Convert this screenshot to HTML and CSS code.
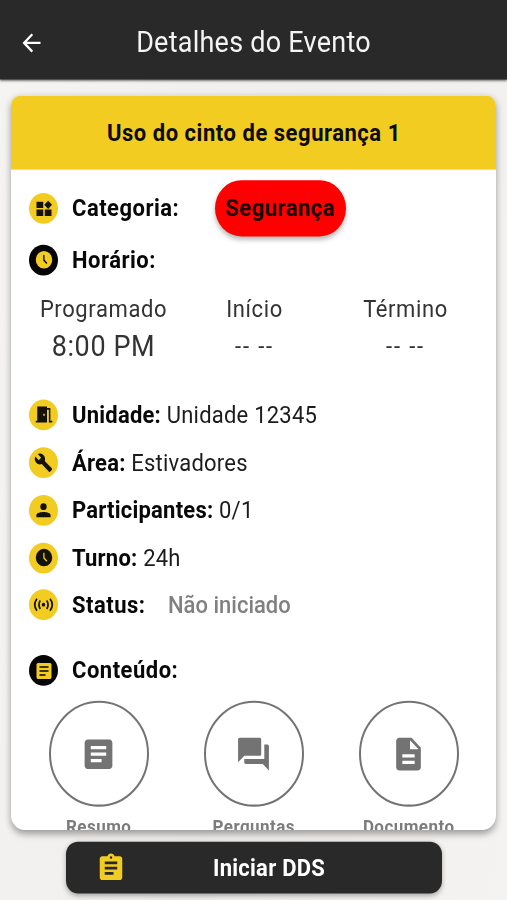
FILE: index.html
```html
<!DOCTYPE html>
<html lang="pt-BR">
<head>
<meta charset="utf-8">
<title>Detalhes do Evento</title>
<link rel="stylesheet" href="styles.css">
</head>
<body>
<div class="screen">
  <header class="topbar">
    <svg class="back" viewBox="0 0 24 24"><path d="M20 11H7.830l5.590-5.590L12 4l-8 8 8 8 1.410-1.410L7.830 13H20z"/></svg>
    <h1>Detalhes do Evento</h1>
  </header>
  <main class="card">
    <h2>Uso do cinto de segurança 1</h2>
    <div class="details">
      <div class="row category">
        <span class="badge"><svg viewBox="0 0 24 24"><path d="M2 3h9v8H2zM2 13h9v8H2zM13 13h9v8h-9zM17.500 1.800L22.700 7l-5.200 5.200L12.300 7z"/></svg></span>
        <b>Categoria:</b><span class="pill">Segurança</span>
      </div>
      <div class="row">
        <span class="badge dark"><svg viewBox="0 0 24 24"><path fill-rule="evenodd" d="M12 1a11 11 0 1 0 0 22 11 11 0 0 0 0-22zM11 6h1.700v6l3.800 4-1.300 1.300L11 13z"/></svg></span>
        <b>Horário:</b>
      </div>
      <div class="times">
        <div><span>Programado</span><span class="value">8:00 PM</span></div>
        <div><span>Início</span><span class="value empty">-- --</span></div>
        <div><span>Término</span><span class="value empty">-- --</span></div>
      </div>
      <div class="row item">
        <span class="badge"><svg viewBox="0 0 24 24"><path fill-rule="evenodd" d="M3 2h13v20H1v-2h2zM11 11v2.500h2V11zM16 4h4.500v16H23v2h-4.500V6H16z"/></svg></span>
        <p><b>Unidade:</b> Unidade 12345</p>
      </div>
      <div class="row item">
        <span class="badge"><svg class="wrench" viewBox="0 0 24 24"><path d="M22.700 19l-9.100-9.100c.9-2.300.4-5-1.500-6.900-2-2-5-2.400-7.400-1.300L9 6 6 9 1.600 4.700C.4 7.100.9 10.100 2.900 12.100c1.900 1.900 4.600 2.400 6.900 1.500l9.100 9.100c.4.4 1 .4 1.400 0l2.300-2.300c.5-.4.5-1.100.1-1.400z"/></svg></span>
        <p><b>Área:</b> Estivadores</p>
      </div>
      <div class="row item">
        <span class="badge"><svg class="person" viewBox="0 0 24 24"><path d="M12 11.500a4.500 4.500 0 1 0 0-9 4.500 4.500 0 0 0 0 9zm0 2.500c-3.300 0-10 1-10 4V21h20v-3c0-3-6.700-4-10-4z"/></svg></span>
        <p><b>Participantes:</b> 0/1</p>
      </div>
      <div class="row item">
        <span class="badge"><svg viewBox="0 0 24 24"><path fill-rule="evenodd" d="M12 1a11 11 0 1 0 0 22 11 11 0 0 0 0-22zM11 6h1.700v6l3.800 4-1.300 1.300L11 13z"/></svg></span>
        <p><b>Turno:</b> 24h</p>
      </div>
      <div class="row item">
        <span class="badge"><svg class="signal" viewBox="0 0 24 24"><circle cx="12" cy="12" r="2"/><path class="line" d="M4.500 5.500q-5 6.500 0 13M19.500 5.500q5 6.500 0 13M8.300 7.500q-3 4.500 0 9M15.700 7.500q3 4.500 0 9"/></svg></span>
        <b>Status:</b><span class="status">Não iniciado</span>
      </div>
      <div class="row content-title">
        <span class="badge dark"><svg viewBox="0 0 24 24"><path fill-rule="evenodd" d="M4 2h16a2 2 0 0 1 2 2v16a2 2 0 0 1-2 2H4a2 2 0 0 1-2-2V4a2 2 0 0 1 2-2zM6 6v2h12V6zM6 11v2h12v-2zM6 16v2h8v-2z"/></svg></span>
        <b>Conteúdo:</b>
      </div>
      <nav class="contents">
        <a><span class="ring"><svg viewBox="0 0 24 24"><path d="M19 3H5c-1.100 0-2 .9-2 2v14c0 1.100.9 2 2 2h14c1.100 0 2-.9 2-2V5c0-1.100-.9-2-2-2zm-5 14H7v-2h7v2zm3-4H7v-2h10v2zm0-4H7V7h10v2z"/></svg></span>Resumo</a>
        <a><span class="ring"><svg viewBox="0 0 24 24"><path d="M21 6h-2v9H6v2c0 .55.45 1 1 1h11l4 4V7c0-.55-.45-1-1-1zm-4 6V3c0-.55-.45-1-1-1H3c-.55 0-1 .45-1 1v14l4-4h10c.55 0 1-.45 1-1z"/></svg></span>Perguntas</a>
        <a><span class="ring"><svg viewBox="0 0 24 24"><path d="M14 2H6c-1.100 0-2 .9-2 2v16c0 1.100.9 2 2 2h12c1.100 0 2-.9 2-2V8l-6-6zm2 16H8v-2h8v2zm0-4H8v-2h8v2zm-3-5V3.500L18.500 9H13z"/></svg></span>Documento</a>
      </nav>
    </div>
  </main>
  <button class="start">
    <svg viewBox="0 0 24 24"><path d="M19 3h-4.180C14.400 1.840 13.300 1 12 1s-2.400.84-2.820 2H5c-1.100 0-2 .9-2 2v14c0 1.100.9 2 2 2h14c1.100 0 2-.9 2-2V5c0-1.100-.9-2-2-2zm-7 0c.55 0 1 .45 1 1s-.45 1-1 1-1-.45-1-1 .45-1 1-1zm2 14H7v-2h7v2zm3-4H7v-2h10v2zm0-4H7V7h10v2z"/></svg>
    <span>Iniciar DDS</span>
  </button>
</div>
</body>
</html>
```
FILE: styles.css
```css
* { box-sizing: border-box; margin: 0; padding: 0; }
html { height: 900px; overflow: hidden; background: #f1f0ef; }
body { height: 900px; overflow: hidden; font-family: Roboto, sans-serif; }

.screen {
  width: 507px;
  height: 849.06px;
  transform: scaleY(1.06);
  transform-origin: 0 0;
  display: flex;
  flex-direction: column;
  background: linear-gradient(100deg, #f5f4f3, #efeeed 50%, #f4f3f2);
  font-size: 22px;
  color: #1c1c1c;
}

.topbar {
  height: 74.5px;
  flex: none;
  display: grid;
  grid-template-columns: 62px 1fr 62px;
  align-items: center;
  padding-top: 6px;
  background: #292929;
  box-shadow: 0 1px 2px rgba(0, 0, 0, .5);
  color: #f4f4f4;
}
.back { width: 27px; height: 27px; margin-left: 18px; fill: #fff; }
h1 { font-size: 27px; font-weight: 400; letter-spacing: .24px; text-align: center; white-space: nowrap; }

.card {
  height: 693px;
  flex: none;
  margin: 15.5px 10.6px 0 11.4px;
  border-radius: 10px 10px 14px 14px;
  overflow: hidden;
  background: #fff;
  box-shadow: 0 3px 7px rgba(0, 0, 0, .36);
}
h2 {
  height: 70px;
  line-height: 71px;
  background: #f3cc22;
  text-align: center;
  font-size: 22px;
  font-weight: 700;
  letter-spacing: .53px;
  color: #0c0c04;
}
b { font-weight: 700; letter-spacing: .5px; color: #080808; }
p { letter-spacing: .22px; }
p b { letter-spacing: .22px; }

.details { padding: 10px 0 0 18px; }
.row { display: flex; align-items: center; height: 30px; white-space: nowrap; }
.category { height: 53px; margin-bottom: 7px; }
.item { height: 44.9px; }
.badge {
  width: 29px;
  height: 29px;
  margin-right: 13.6px;
  flex: none;
  display: grid;
  place-items: center;
  border-radius: 50%;
  background: #f3cc22;
  fill: #14120a;
}
.badge.dark { background: #050505; fill: #f3cc22; }
.badge svg { width: 18px; height: 18px; }
.badge svg.person { width: 17px; height: 17px; }
.badge svg.wrench { width: 19px; height: 19px; }
.badge svg.signal { width: 21px; height: 21px; }
.line { fill: none; stroke: #14120a; stroke-width: 2; }

.pill {
  width: 131px;
  height: 53px;
  margin-left: 35.6px;
  line-height: 53px;
  border-radius: 27px;
  background: #f00;
  color: #170000;
  text-align: center;
  font-weight: 700;
  letter-spacing: .5px;
  box-shadow: 0 3px 5px rgba(0, 0, 0, .3);
}

.times {
  display: grid;
  grid-template-columns: repeat(3, 151px);
  margin: 17px 0 22.9px -1.4px;
  text-align: center;
  color: #333;
}
.times div { display: flex; flex-direction: column; }
.times span { height: 30px; line-height: 30px; letter-spacing: .6px; }
.times .value { height: 39px; line-height: 41px; font-size: 27px; letter-spacing: .6px; }
.times .empty { line-height: 39px; font-size: 22px; letter-spacing: 1.8px; }

.status { margin-left: 22.5px; color: #808080; font-weight: 500; }
.content-title { margin-top: 24.6px; }

.contents {
  display: grid;
  grid-template-columns: repeat(3, 155px);
  margin: 13.5px 0 0 -8.2px;
}
.contents a {
  display: flex;
  flex-direction: column;
  align-items: center;
  font-size: 17px;
  line-height: 20px;
  font-weight: 700;
  letter-spacing: .45px;
  color: #7c7c7c;
}
.ring {
  width: 100px;
  height: 100px;
  margin-bottom: 8.5px;
  display: grid;
  place-items: center;
  border: 2px solid #737373;
  border-radius: 50%;
}
.ring svg { width: 37px; height: 37px; fill: #737373; }

.start {
  width: 376px;
  height: 49px;
  margin: 11px 0 0 66px;
  flex: none;
  display: flex;
  align-items: center;
  border: 0;
  border-radius: 12px;
  background: #292929;
  box-shadow: 0 2px 5px rgba(0, 0, 0, .3);
  color: #fff;
  font: 700 22px Roboto, sans-serif;
  letter-spacing: .25px;
}
.start svg { width: 30px; height: 30px; margin-left: 30px; fill: #f3cc22; }
.start span { margin-left: 87px; }
```
